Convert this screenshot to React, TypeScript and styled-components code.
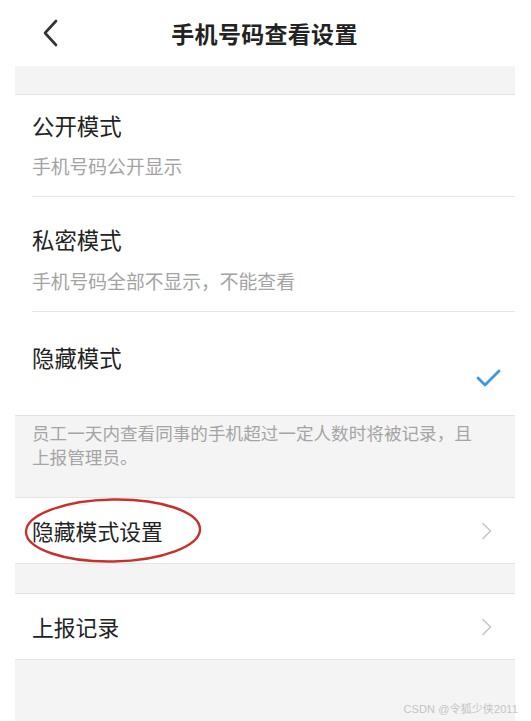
import React from "react";
import styled, { createGlobalStyle } from "styled-components";

const Global = createGlobalStyle`
  html, body { margin: 0; padding: 0; background: #fff; }
  body { font-family: "Noto Sans CJK SC", "Noto Sans", sans-serif; }
`;

const Screen = styled.div`
  position: relative;
  width: 531px;
  height: 721px;
  overflow: hidden;
  background: #fff;
`;

const Header = styled.header`
  position: relative;
  height: 66px;
  display: flex;
  align-items: center;
  justify-content: center;
`;

const BackButton = styled.div`
  position: absolute;
  left: 38px;
  top: 17px;
  width: 24px;
  height: 32px;
  display: flex;
  align-items: center;
  justify-content: center;
`;

const Title = styled.h1`
  margin: 0;
  font-size: 23px;
  font-weight: 700;
  color: #222;
  letter-spacing: 0.3px;
  line-height: 30px;
  transform: translateX(-1px);
`;

const Content = styled.main`
  width: 500px;
  margin-left: 15px;
  height: 655px;
  background: #f4f4f4;
  display: flex;
  flex-direction: column;
`;

const Gap = styled.div<{ $h: number }>`
  height: ${(p) => p.$h}px;
  background: #f4f4f4;
  border-bottom: 1px solid #e2e2e2;
`;

const Group = styled.section`
  background: #fff;
  border-bottom: 1px solid #e4e4e4;
`;

const OptionRow = styled.div<{ $pt: number; $pb: number; $gap: number; $last?: boolean }>`
  position: relative;
  margin-left: 17px;
  padding: ${(p) => p.$pt}px 0 ${(p) => p.$pb}px 0;
  border-bottom: ${(p) => (p.$last ? "none" : "1px solid #e6e6e6")};
  display: flex;
  flex-direction: column;
  gap: ${(p) => p.$gap}px;
`;

const OptionTitle = styled.div`
  font-size: 22.4px;
  line-height: 30px;
  color: #222;
`;

const OptionSub = styled.div`
  font-size: 18.8px;
  line-height: 26px;
  color: #a3a3a3;
`;

const Check = styled.div`
  position: absolute;
  right: 11px;
  top: 53px;
  width: 30px;
  height: 26px;
`;

const Note = styled.div`
  padding: 5px 30px 28px 17px;
  font-size: 17.6px;
  line-height: 24px;
  color: #a5a5a5;
  border-bottom: 1px solid #e4e4e4;
`;

const LinkRow = styled.div`
  position: relative;
  height: 65px;
  background: #fff;
  border-bottom: 1px solid #e4e4e4;
  display: flex;
  align-items: center;
  justify-content: space-between;
  padding: 0 22px 0 17px;
`;

const LinkText = styled.span`
  font-size: 21.8px;
  line-height: 30px;
  color: #222;
`;

const Annotation = styled.svg`
  position: absolute;
  left: 7px;
  top: 0px;
  pointer-events: none;
`;

const Filler = styled.div`
  flex: 1;
  background: #f4f4f4;
`;

const Watermark = styled.div`
  position: absolute;
  right: 13px;
  bottom: 5px;
  font-family: "Liberation Sans", "Noto Sans CJK SC", sans-serif;
  font-size: 11px;
  color: #c4c4c4;
  letter-spacing: 0.1px;
`;

const Chevron = () => (
  <svg width="12" height="18" viewBox="0 0 12 18">
    <polyline points="2,1.5 9.5,9 2,16.5" fill="none" stroke="#c6c6c6" strokeWidth="1.6" strokeLinecap="round" strokeLinejoin="round" />
  </svg>
);

export default function App() {
  return (
    <>
      <Global />
      <Screen>
        <Header>
          <BackButton>
            <svg width="20" height="30" viewBox="0 0 20 30">
              <polyline points="16,3 5,15 16,27" fill="none" stroke="#333" strokeWidth="2.6" strokeLinecap="round" strokeLinejoin="round" />
            </svg>
          </BackButton>
          <Title>手机号码查看设置</Title>
        </Header>
        <Content>
          <Gap $h={28} />
          <Group>
            <OptionRow $pt={15} $pb={17} $gap={13}>
              <OptionTitle>公开模式</OptionTitle>
              <OptionSub>手机号码公开显示</OptionSub>
            </OptionRow>
            <OptionRow $pt={27} $pb={17} $gap={14}>
              <OptionTitle>私密模式</OptionTitle>
              <OptionSub>手机号码全部不显示，不能查看</OptionSub>
            </OptionRow>
            <OptionRow $pt={30} $pb={43} $gap={0} $last>
              <OptionTitle>隐藏模式</OptionTitle>
              <Check>
                <svg width="30" height="26" viewBox="0 0 30 26">
                  <polyline points="4,13 11,20 25,6" fill="none" stroke="#3a9ae0" strokeWidth="2.8" strokeLinecap="round" strokeLinejoin="round" />
                </svg>
              </Check>
            </OptionRow>
          </Group>
          <Note>员工一天内查看同事的手机超过一定人数时将被记录，且上报管理员。</Note>
          <LinkRow>
            <LinkText>隐藏模式设置</LinkText>
            <Chevron />
            <Annotation width="184" height="66" viewBox="0 0 184 66">
              <ellipse cx="91" cy="32.5" rx="87" ry="31" fill="none" stroke="#c9302b" strokeWidth="2.4" transform="rotate(-1 91 32.5)" />
            </Annotation>
          </LinkRow>
          <Gap $h={29} />
          <LinkRow>
            <LinkText>上报记录</LinkText>
            <Chevron />
          </LinkRow>
          <Filler />
        </Content>
        <Watermark>CSDN @令狐少侠2011</Watermark>
      </Screen>
    </>
  );
}
